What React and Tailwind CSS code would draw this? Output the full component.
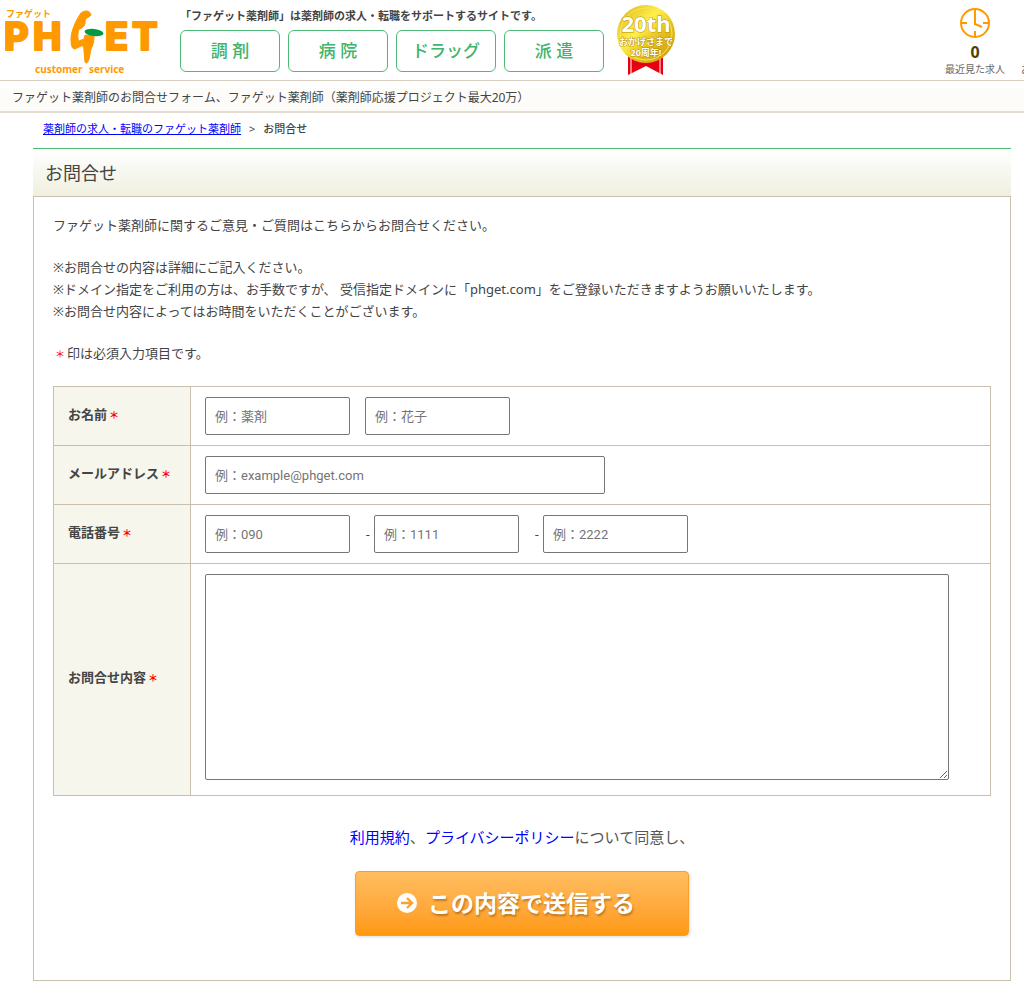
const NAV_ITEMS = ["調 剤", "病 院", "ドラッグ", "派 遣"];

const inputClass =
  "h-[38px] rounded-xs border border-[#767676] bg-white px-[9px] font-['Roboto','Noto_Sans_CJK_JP',sans-serif] text-[13px] text-[#444] placeholder:text-[#757575]";

const Logo = () => (
  <svg width="155" height="74" viewBox="0 0 155 74" role="img" aria-label="PHGET customer service">
    <g fill="#ff9900" fontWeight="700" fontFamily="'Noto Sans', 'Noto Sans CJK JP', sans-serif">
      <text x="1" y="13" fontSize="9">ファゲット</text>
      <g
        fontFamily="Inter, sans-serif"
        fontWeight="800"
        fontSize="38"
        stroke="#ff9900"
        strokeWidth="2"
        strokeLinejoin="round"
      >
        <text x="-1" y="46">P</text>
        <text x="28" y="46">H</text>
        <text x="100" y="46">E</text>
        <text x="127" y="46">T</text>
      </g>
      <text x="30" y="69" fontSize="10">customer</text>
      <text x="84" y="69" fontSize="10">service</text>
    </g>
    {/* arm raised over a leaf */}
    <path
      d="M86 11C85 6 80 6 76 9C71 16 66 27 66 35C66 42 67 45 70 45L76 42C78 41 79 43 79 47L80 58C81 60 83 59 84 55L86 45C88 41 89 38 89 32L80 31L79 35L74 37C72 34 73 28 74 25C77 25 81 21 80 17C81 13 84 14 86 11Z"
      fill="#ff9900"
      stroke="#ff9900"
      strokeWidth="1"
      strokeLinejoin="round"
    />
    <ellipse cx="89" cy="28.5" rx="9.5" ry="3.5" transform="rotate(7 89 28.5)" fill="#009944" />
  </svg>
);

const AnniversaryBadge = () => (
  <svg width="60" height="72" viewBox="0 0 60 72" role="img" aria-label="20周年">
    <defs>
      <linearGradient id="gold" x1="0" y1="0" x2="1" y2="1">
        <stop offset="0" stopColor="#d9ae12" />
        <stop offset="0.4" stopColor="#fff04a" />
        <stop offset="0.65" stopColor="#e3bd1c" />
        <stop offset="1" stopColor="#c99a08" />
      </linearGradient>
    </defs>
    <path d="M12 50H47V71L30 62L12 71Z" fill="#e60012" />
    <path d="M15 50V72M44 50V72" stroke="#fff" strokeWidth="1" />
    <circle cx="30" cy="30" r="29" fill="url(#gold)" />
    <circle cx="30" cy="30" r="26" fill="none" stroke="#f8e65a" />
    <g
      fill="#fff"
      stroke="#b8900f"
      strokeWidth="1"
      paintOrder="stroke"
      textAnchor="middle"
      fontWeight="700"
      fontFamily="'Noto Sans', 'Noto Sans CJK JP', sans-serif"
    >
      <text x="30" y="28" fontSize="22">20th</text>
      <text x="30" y="41" fontSize="9">おかげさまで</text>
      <text x="30" y="52" fontSize="9">20周年!</text>
    </g>
  </svg>
);

const ClockIcon = () => (
  <svg width="32" height="32" viewBox="0 0 32 32" fill="none" stroke="#ff9900" strokeWidth="2" aria-hidden="true">
    <circle cx="16" cy="16" r="14" />
    <path d="M16 2V17L23 20M2 16H8M24 16H30M16 24V30" />
  </svg>
);

const ArrowIcon = () => (
  <svg width="20" height="20" viewBox="0 0 20 20" aria-hidden="true">
    <circle cx="10" cy="10" r="10" fill="#fff" />
    <path d="M4 10H15M10 5L15 10L10 15" fill="none" stroke="#f9a22c" strokeWidth="2.4" />
  </svg>
);

const Header = () => (
  <header className="flex h-[81px] overflow-hidden border-b border-[#d9cfc0]">
    <a href="#" className="ml-[5px] mt-1 shrink-0">
      <Logo />
    </a>
    <div className="ml-5 mt-2 shrink-0">
      <p className="h-[22px] w-[436px] whitespace-nowrap text-[11px] leading-4 font-bold">
        「ファゲット薬剤師」は薬剤師の求人・転職をサポートするサイトです。
      </p>
      <nav className="flex gap-2">
        {NAV_ITEMS.map((item) => (
          <a
            key={item}
            href="#"
            className="flex h-[42px] w-[100px] items-center justify-center rounded-md border border-[#4dba76] text-[17px] font-medium text-[#3fb46b]"
          >
            {item}
          </a>
        ))}
      </nav>
    </div>
    <div className="mt-1 shrink-0">
      <AnniversaryBadge />
    </div>
    <div className="ml-auto flex gap-4 pt-[7px] text-[10px] leading-4 text-[#666]">
      <a href="#" className="flex w-[60px] flex-col items-center">
        <ClockIcon />
        <span className="pt-1.5 text-base leading-[14px] font-bold text-[#553f00]">0</span>
        <span className="whitespace-nowrap pt-0.5">最近見た求人</span>
      </a>
      <span className="w-[3px] overflow-hidden pt-[54px]">お</span>
    </div>
  </header>
);

const Required = () => <span className="px-0.5 text-[10px] text-[#ff0000]">＊</span>;

const Row = ({ id, label, children }) => (
  <tr>
    <th scope="row" className="w-[137px] border border-[#c9bfae] bg-[#f6f6ec] px-[14px] pb-1 text-left font-bold">
      <label htmlFor={id}>
        {label}
        <Required />
      </label>
    </th>
    <td className="border border-[#c9bfae] px-[14px] py-[10px]">{children}</td>
  </tr>
);

const ContactForm = () => (
  <form onSubmit={(e) => e.preventDefault()}>
    <table className="w-full border-collapse">
      <tbody>
        <Row id="last-name" label="お名前">
          <div className="flex gap-[15px]">
            <input id="last-name" className={`${inputClass} w-[145px]`} placeholder="例：薬剤" />
            <input aria-label="名" className={`${inputClass} w-[145px]`} placeholder="例：花子" />
          </div>
        </Row>
        <Row id="email" label="メールアドレス">
          <input id="email" type="email" className={`${inputClass} block w-[400px]`} placeholder="例：example@phget.com" />
        </Row>
        <Row id="tel" label="電話番号">
          <div className="flex items-center">
            <input id="tel" type="tel" className={`${inputClass} w-[145px]`} placeholder="例：090" />
            <span className="w-6 pr-1 text-right">-</span>
            <input aria-label="市内局番" type="tel" className={`${inputClass} w-[145px]`} placeholder="例：1111" />
            <span className="w-6 pr-1 text-right">-</span>
            <input aria-label="加入者番号" type="tel" className={`${inputClass} w-[145px]`} placeholder="例：2222" />
          </div>
        </Row>
        <Row id="message" label="お問合せ内容">
          <textarea
            id="message"
            className="mb-[5px] block h-[206px] w-[744px] max-w-full rounded-xs border border-[#767676] bg-white p-2"
          />
        </Row>
      </tbody>
    </table>

    <p className="mt-[30px] text-center text-[15px] leading-[22px] text-[#555]">
      <a href="#" className="text-[#0000ff]">利用規約</a>、
      <a href="#" className="text-[#0000ff]">プライバシーポリシー</a>
      について同意し、
    </p>
    <button
      type="submit"
      className="mx-auto mt-[23px] flex h-[65px] w-[334px] items-center justify-center gap-[11px] rounded-sm border border-[#f5a02a] bg-linear-to-b from-[#ffbe5f] to-[#ff990a] pr-3 pb-0.5 text-[23px] font-bold text-white shadow-[1px_1px_3px_rgba(0,0,0,0.15)] text-shadow-[1px_2px_2px_rgba(130,75,0,0.5)]"
    >
      <ArrowIcon />
      この内容で送信する
    </button>
  </form>
);

const App = () => {
  return (
    <div className="bg-white pb-[11px] font-['Noto_Sans','Noto_Sans_CJK_JP',sans-serif] text-[13px] leading-[22px] text-[#444]">
      <Header />
      <p className="mt-[7px] border-b-2 border-[#e3ddd5] bg-[#fdfcf8] pb-1 pl-3 text-xs leading-[19px]">
        ファゲット薬剤師のお問合せフォーム、ファゲット薬剤師（薬剤師応援プロジェクト最大20万）
      </p>

      <main className="ml-[33px] mr-[13px]">
        <nav className="flex h-[35px] items-center gap-2 pb-1 pl-[10px] text-[11px]">
          <a href="#" className="text-[#0000ff] underline">
            薬剤師の求人・転職のファゲット薬剤師
          </a>
          <span>&gt;</span>
          <span className="font-medium">お問合せ</span>
        </nav>

        <h1 className="flex h-12 items-center border-t border-[#4dba76] bg-linear-to-b from-white to-[#efefe0] pl-3 text-lg">
          お問合せ
        </h1>

        <section className="border border-[#c9bfae] px-[19px] pt-[17px] pb-11">
          <p className="mb-5">ファゲット薬剤師に関するご意見・ご質問はこちらからお問合せください。</p>
          <p className="mb-5">
            ※お問合せの内容は詳細にご記入ください。
            <br />
            ※ドメイン指定をご利用の方は、お手数ですが、 受信指定ドメインに「phget.com」をご登録いただきますようお願いいたします。
            <br />
            ※お問合せ内容によってはお時間をいただくことがございます。
          </p>
          <p className="mb-[21px]">
            <Required />
            印は必須入力項目です。
          </p>
          <ContactForm />
        </section>
      </main>
    </div>
  );
};

export default App;
